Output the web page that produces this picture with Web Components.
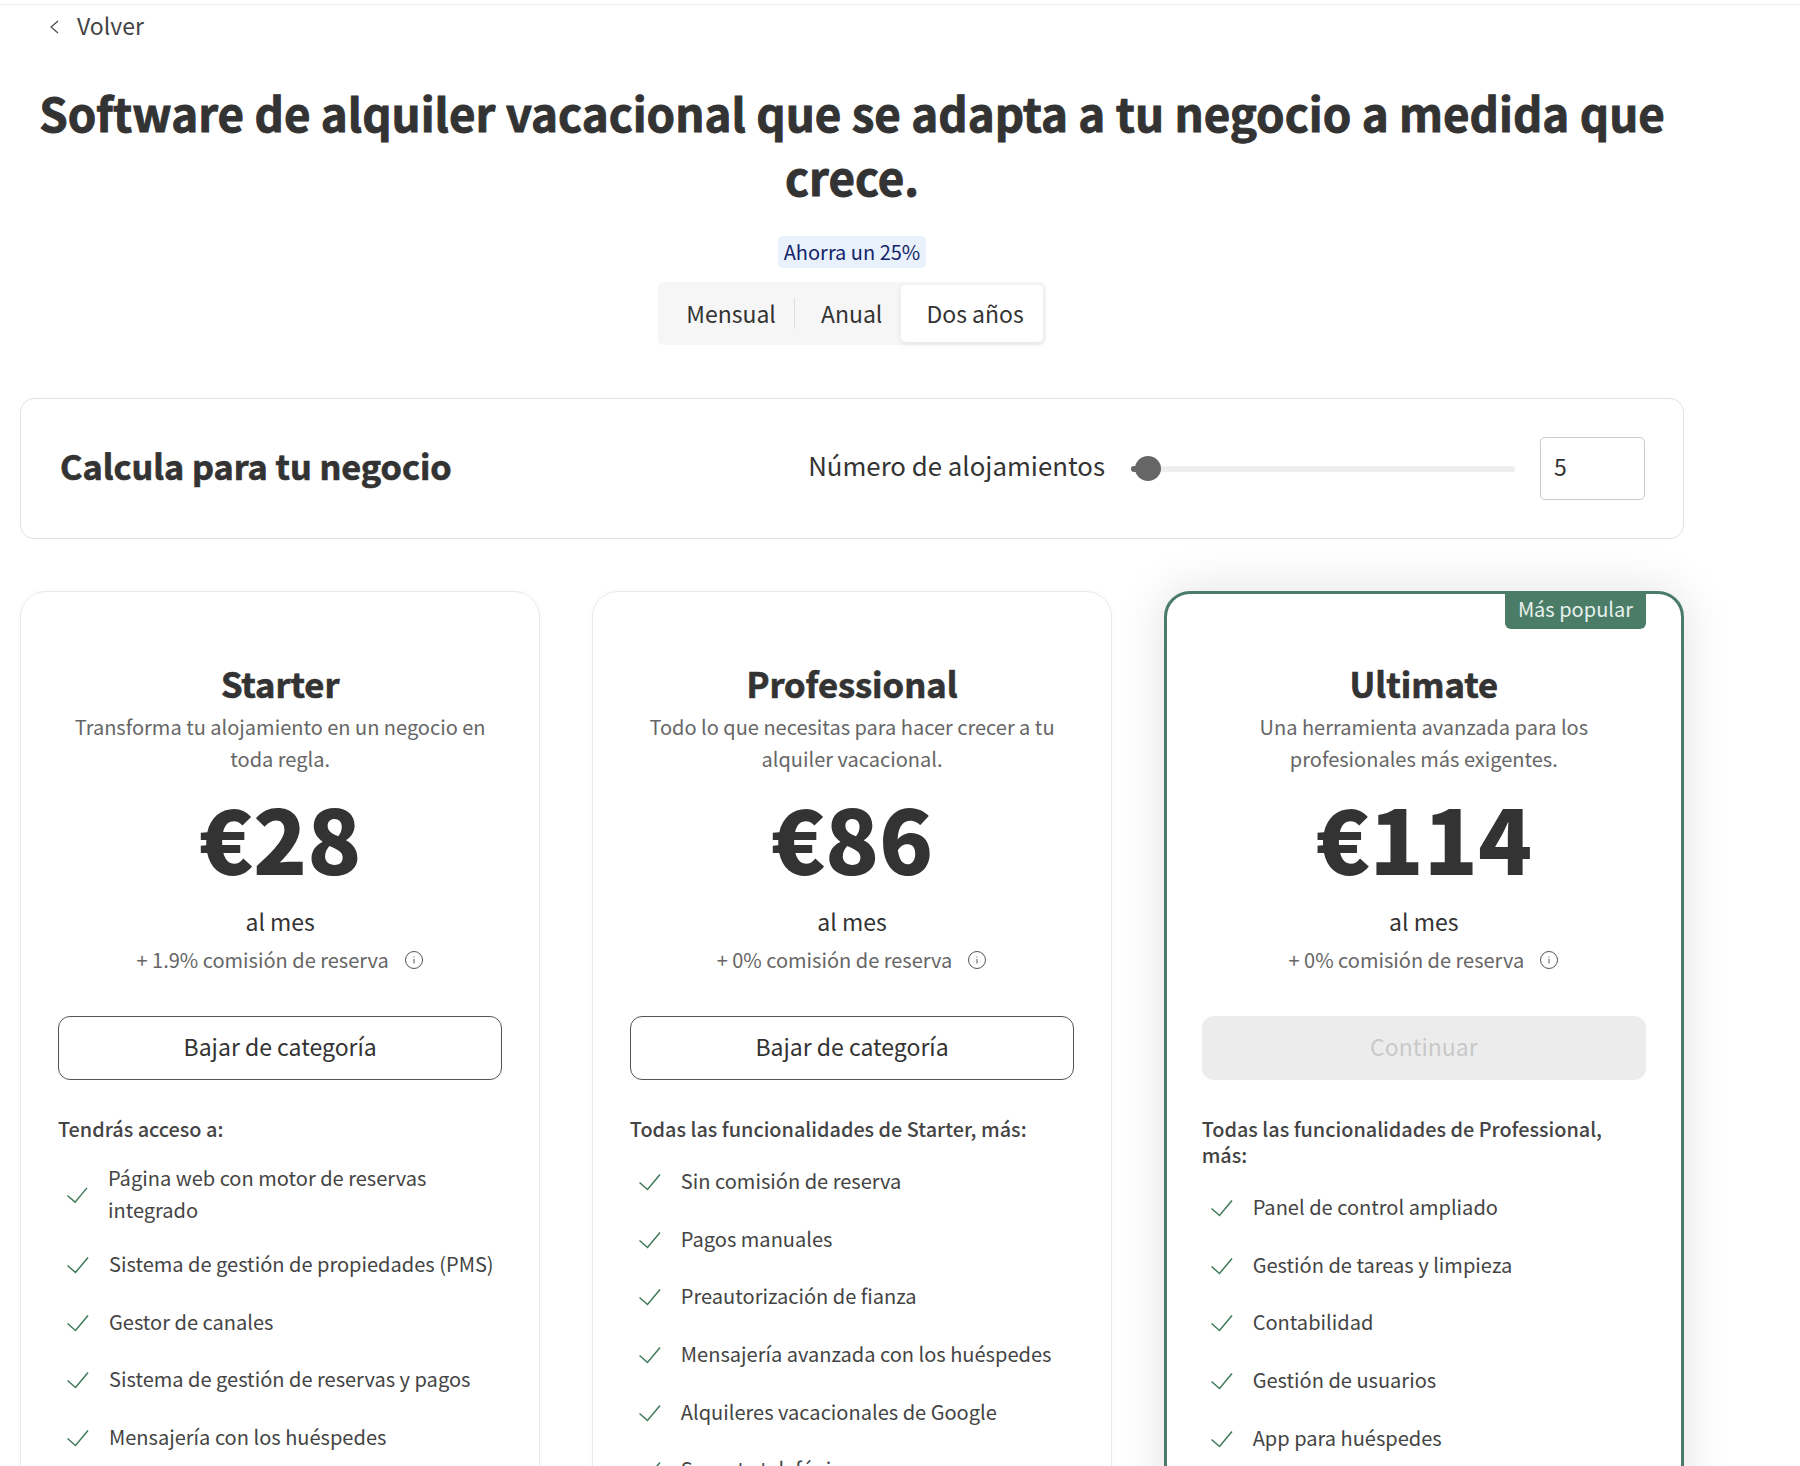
<!DOCTYPE html>
<html lang="es">
<head>
<meta charset="utf-8">
<title>Planes</title>
<style>
  html, body {
    margin: 0;
    height: 1466px;
    overflow: hidden;
    background: #fff;
    font-family: "Noto Sans CJK JP", "Noto Sans", sans-serif;
    color: #333;
  }
</style>
</head>
<body>
<pricing-page></pricing-page>

<script>
const CHECK_ICON = `<svg viewBox="0 0 24 24" fill="none" stroke="#3f7a58" stroke-width="1.5"><path d="M1.500 12.500 9.500 19.500 22 4.500"/></svg>`;

const templateBackLink = document.createElement("template");
templateBackLink.innerHTML = `
<style>
  :host { display: flex; align-items: center; gap: 18px; padding-left: 29px; height: 42px; font-size: 23px; color: #444; }
  svg { width: 10px; height: 14px; position: relative; top: 1px; }
  span { position: relative; top: -1px; }
</style>
<svg viewBox="0 0 10 14" fill="none" stroke="#444" stroke-width="1.1"><path d="M9 1 2 7l7 6"/></svg>
<span><slot></slot></span>
`;

/**
 * Link back to the previous page
 */
class BackLink extends HTMLElement {
  constructor() {
    super();
    this.attachShadow({ mode: "open" });
    this.shadowRoot.appendChild(templateBackLink.content.cloneNode(true));
  }
}

const templateBillingToggle = document.createElement("template");
templateBillingToggle.innerHTML = `
<style>
  :host { display: flex; flex-direction: column; align-items: center; }
  .save { background: #e9f1fc; color: #12246b; font-size: 20px; line-height: 32px; padding: 0 6px; border-radius: 5px; margin-bottom: 14px; }
  .toggle { display: flex; align-items: center; background: #f6f6f6; border-radius: 6px; padding: 3px; height: 57px; }
  .toggle div { font-size: 23px; line-height: 57px; position: relative; color: #333; }
  .toggle div.first { padding: 0 19px 0 25px; }
  .toggle div.first::after { content: ""; position: absolute; right: 0; top: 13px; bottom: 13px; width: 1px; background: #ddd; }
  .toggle div.mid { padding: 0 19px 0 26px; }
  .toggle div.on { padding: 0 19px 0 25px; background: #fff; border-radius: 5px; box-shadow: 0 2px 6px rgba(0,0,0,.08); }
</style>
<div class="save">Ahorra un 25%</div>
<div class="toggle">
  <div class="first">Mensual</div>
  <div class="mid">Anual</div>
  <div class="on">Dos años</div>
</div>
`;

/**
 * Billing period selector with the saving badge above it
 */
class BillingToggle extends HTMLElement {
  constructor() {
    super();
    this.attachShadow({ mode: "open" });
    this.shadowRoot.appendChild(templateBillingToggle.content.cloneNode(true));
  }
}

const templateCalcPanel = document.createElement("template");
templateCalcPanel.innerHTML = `
<style>
  :host { display: flex; align-items: center; box-sizing: border-box; height: 141px; padding: 0 38px 0 39px; border: 1px solid #e2e2e2; border-radius: 14px; background: #fff; }
  h2 { margin: 0 0 7px; font-size: 34.200px; font-weight: 700; -webkit-text-stroke: .7px #333; color: #333; flex: 1; line-height: 48px; }
  .label { font-size: 25.800px; color: #333; margin: 0 26px 8px 0; }
  .slider { position: relative; width: 384px; height: 6px; background: #eee; border-radius: 3px; margin-right: 25px; }
  .fill { position: absolute; left: 0; top: 0; bottom: 0; width: 14px; background: #666; border-radius: 3px 0 0 3px; }
  .thumb { position: absolute; left: 4px; top: -9.500px; width: 26px; height: 25px; background: #666; border-radius: 50%; }
  .value { box-sizing: border-box; width: 105px; height: 63px; border: 1px solid #ccc; border-radius: 5px; padding-left: 13px; font-size: 23px; line-height: 56px; color: #333; }
</style>
<h2>Calcula para tu negocio</h2>
<span class="label">Número de alojamientos</span>
<div class="slider"><div class="fill"></div><div class="thumb"></div></div>
<div class="value">5</div>
`;

/**
 * Panel with the slider for the number of listings
 */
class CalcPanel extends HTMLElement {
  constructor() {
    super();
    this.attachShadow({ mode: "open" });
    this.shadowRoot.appendChild(templateCalcPanel.content.cloneNode(true));
  }
}

const templateFeatureItem = document.createElement("template");
templateFeatureItem.innerHTML = `
<style>
  :host { display: flex; align-items: center; gap: 19px; box-sizing: border-box; padding: 9.500px 0 9.500px 8px; font-size: 20.050px; line-height: 32px; color: #444; min-height: 57.600px; }
  svg { width: 24px; height: 24px; flex: 0 1 24px; min-width: 0; }
  span { position: relative; top: -1px; }
</style>
${CHECK_ICON}
<span><slot></slot></span>
`;

/**
 * One line of a plan's feature list
 */
class FeatureItem extends HTMLElement {
  constructor() {
    super();
    this.attachShadow({ mode: "open" });
    this.shadowRoot.appendChild(templateFeatureItem.content.cloneNode(true));
  }
}

const templatePlanCard = document.createElement("template");
templatePlanCard.innerHTML = `
<style>
  :host { display: block; position: relative; box-sizing: border-box; height: 1000px; padding: 68px 37px 0; border: 1px solid #eaeaea; border-radius: 26px; background: #fff; box-shadow: 0 0 6px rgba(0,0,0,.03); text-align: center; }
  :host([popular]) { border: 3px solid #4a7c67; padding: 66px 35px 0; box-shadow: 0 0 50px rgba(0,0,0,.12); }
  .tag { display: none; position: absolute; top: -3px; right: 35px; background: #4a7c67; color: #e8f2ed; font-size: 20px; line-height: 35px; padding: 0 13px 3px; border-radius: 0 0 6px 6px; }
  :host([popular]) .tag { display: block; }
  h3 { margin: 0; font-size: 34.500px; line-height: 46px; font-weight: 700; -webkit-text-stroke: .7px #333; color: #333; }
  .desc { font-size: 20px; line-height: 32px; color: #666; margin-top: 5px; }
  .price { font-size: 89px; line-height: 112px; font-weight: 900; color: #333; margin-top: 5.500px; }
  .period { font-size: 23px; line-height: 32px; color: #333; margin-top: 12.500px; }
  .fee { display: flex; justify-content: center; align-items: center; gap: 15px; font-size: 20px; line-height: 32px; color: #666; margin-top: 7px; }
  .fee svg { width: 20px; height: 20px; }
  .btn { box-sizing: border-box; height: 64px; margin-top: 40px; border: 1.500px solid #555; border-radius: 12px; font-size: 23px; line-height: 58px; color: #333; }
  :host([disabled]) .btn { border: 0; background: #ececec; color: #c9c9c9; line-height: 61px; }
  .lead { font-size: 19.850px; line-height: 26px; font-weight: 500; color: #444; text-align: left; margin-top: 36px; }
  .list { margin-top: 11.500px; text-align: left; }
</style>
<div class="tag">Más popular</div>
<h3></h3>
<div class="desc"></div>
<div class="price"></div>
<div class="period">al mes</div>
<div class="fee"><span></span>
  <svg viewBox="0 0 20 20" fill="none" stroke="#555" stroke-width="1"><circle cx="10" cy="10" r="8.500"/><path d="M10 9v4.500M10 6.500v1"/></svg>
</div>
<div class="btn"></div>
<div class="lead"></div>
<div class="list"><slot></slot></div>
`;

/**
 * Pricing card. Reads its texts from attributes, features come through the slot
 */
class PlanCard extends HTMLElement {
  constructor() {
    super();
    this.attachShadow({ mode: "open" });
    this.shadowRoot.appendChild(templatePlanCard.content.cloneNode(true));
  }

  connectedCallback() {
    const root = this.shadowRoot;
    root.querySelector("h3").textContent = this.getAttribute("name");
    root.querySelector(".desc").textContent = this.getAttribute("desc");
    root.querySelector(".price").textContent = this.getAttribute("price");
    root.querySelector(".fee span").textContent = this.getAttribute("fee");
    root.querySelector(".btn").textContent = this.getAttribute("action");
    root.querySelector(".lead").textContent = this.getAttribute("lead");
  }
}

const templatePricingPage = document.createElement("template");
templatePricingPage.innerHTML = `
<style>
  :host { display: block; box-sizing: border-box; width: 1704px; padding: 4px 20px 0; position: relative; }
  .topline { height: 1px; background: #eee; margin: 0 -20px; width: 1800px; }
  h1 { margin: 33px 0 0; font-size: 45.700px; line-height: 64px; font-weight: 700; -webkit-text-stroke: .9px #333; text-align: center; color: #333; }
  billing-toggle { margin-top: 28px; }
  calc-panel { margin-top: 53px; }
  .plans { display: grid; grid-template-columns: repeat(3, 1fr); gap: 51.500px; margin-top: 52px; }
</style>
<div class="topline"></div>
<back-link>Volver</back-link>
<h1>Software de alquiler vacacional que se adapta a tu negocio a medida que crece.</h1>
<billing-toggle></billing-toggle>
<calc-panel></calc-panel>
<div class="plans">
  <plan-card name="Starter" desc="Transforma tu alojamiento en un negocio en toda regla." price="€28" fee="+ 1.9% comisión de reserva" action="Bajar de categoría" lead="Tendrás acceso a:">
    <feature-item>Página web con motor de reservas integrado</feature-item>
    <feature-item>Sistema de gestión de propiedades (PMS)</feature-item>
    <feature-item>Gestor de canales</feature-item>
    <feature-item>Sistema de gestión de reservas y pagos</feature-item>
    <feature-item>Mensajería con los huéspedes</feature-item>
  </plan-card>
  <plan-card name="Professional" desc="Todo lo que necesitas para hacer crecer a tu alquiler vacacional." price="€86" fee="+ 0% comisión de reserva" action="Bajar de categoría" lead="Todas las funcionalidades de Starter, más:">
    <feature-item>Sin comisión de reserva</feature-item>
    <feature-item>Pagos manuales</feature-item>
    <feature-item>Preautorización de fianza</feature-item>
    <feature-item>Mensajería avanzada con los huéspedes</feature-item>
    <feature-item>Alquileres vacacionales de Google</feature-item>
    <feature-item>Soporte telefónico</feature-item>
  </plan-card>
  <plan-card popular disabled name="Ultimate" desc="Una herramienta avanzada para los profesionales más exigentes." price="€114" fee="+ 0% comisión de reserva" action="Continuar" lead="Todas las funcionalidades de Professional, más:">
    <feature-item>Panel de control ampliado</feature-item>
    <feature-item>Gestión de tareas y limpieza</feature-item>
    <feature-item>Contabilidad</feature-item>
    <feature-item>Gestión de usuarios</feature-item>
    <feature-item>App para huéspedes</feature-item>
  </plan-card>
</div>
`;

/**
 * The whole plans page
 */
class PricingPage extends HTMLElement {
  constructor() {
    super();
    this.attachShadow({ mode: "open" });
    this.shadowRoot.appendChild(templatePricingPage.content.cloneNode(true));
  }
}

window.customElements.define("back-link", BackLink);
window.customElements.define("billing-toggle", BillingToggle);
window.customElements.define("calc-panel", CalcPanel);
window.customElements.define("feature-item", FeatureItem);
window.customElements.define("plan-card", PlanCard);
window.customElements.define("pricing-page", PricingPage);
</script>
</body>
</html>
